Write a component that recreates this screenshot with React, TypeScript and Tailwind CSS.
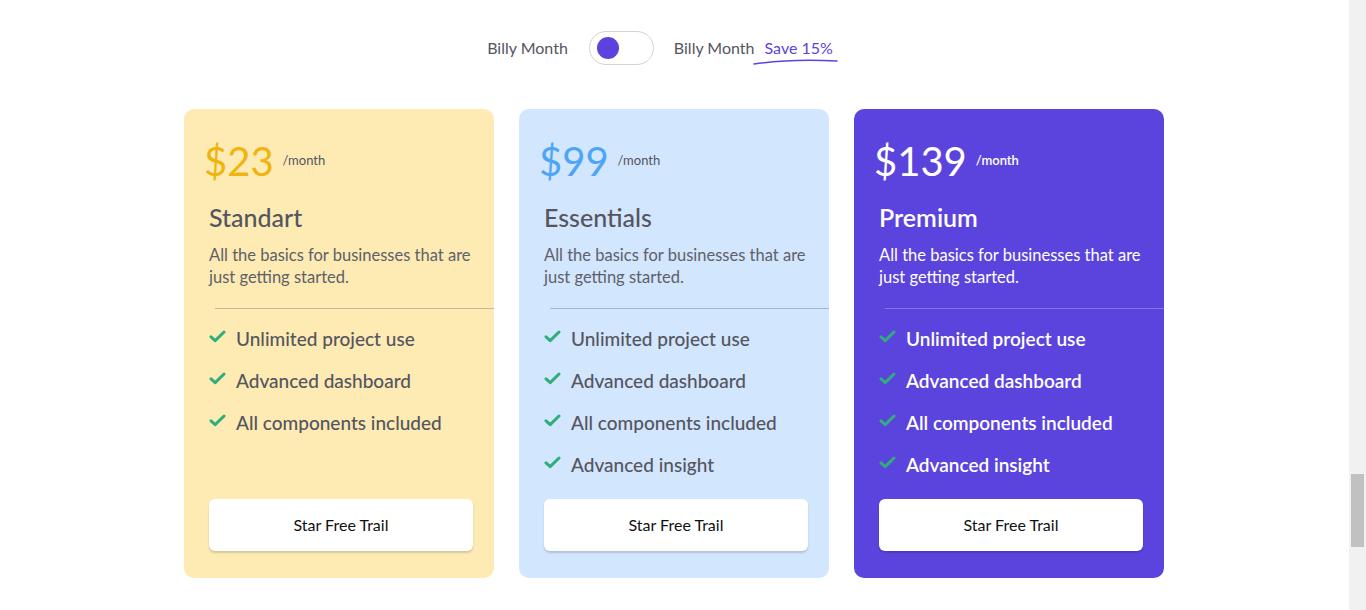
import React from "react";

type Plan = {
  price: string;
  name: string;
  bg: string;
  priceColor: string;
  monthColor: string;
  titleColor: string;
  descColor: string;
  divider: string;
  featColor: string;
  features: string[];
};

const plans: Plan[] = [
  {
    price: "$23",
    name: "Standart",
    bg: "bg-[#fdebb3]",
    priceColor: "text-[#f0b40f]",
    monthColor: "text-[#555560] font-normal",
    titleColor: "text-[#555560] font-medium",
    descColor: "text-[#60606a] font-normal",
    divider: "bg-[#c3b89c]",
    featColor: "text-[#55555f] font-medium",
    features: ["Unlimited project use", "Advanced dashboard", "All components included"],
  },
  {
    price: "$99",
    name: "Essentials",
    bg: "bg-[#d2e6fd]",
    priceColor: "text-[#4ea5f7]",
    monthColor: "text-[#555560] font-normal",
    titleColor: "text-[#555560] font-medium",
    descColor: "text-[#60606a] font-normal",
    divider: "bg-[#a7b6c6]",
    featColor: "text-[#55555f] font-medium",
    features: [
      "Unlimited project use",
      "Advanced dashboard",
      "All components included",
      "Advanced insight",
    ],
  },
  {
    price: "$139",
    name: "Premium",
    bg: "bg-[#5b44de]",
    priceColor: "text-white",
    monthColor: "text-white font-semibold",
    titleColor: "text-white font-semibold",
    descColor: "text-white font-normal",
    divider: "bg-[#8475ea]",
    featColor: "text-white font-semibold",
    features: [
      "Unlimited project use",
      "Advanced dashboard",
      "All components included",
      "Advanced insight",
    ],
  },
];

function CheckIcon() {
  return (
    <svg width="17" height="13" viewBox="0 0 17 13" className="shrink-0">
      <path
        d="M2 6.8 L6.2 10.6 L15 2"
        fill="none"
        stroke="#2fae7b"
        strokeWidth="3"
        strokeLinecap="round"
        strokeLinejoin="round"
      />
    </svg>
  );
}

function Card({ p }: { p: Plan }) {
  return (
    <div className={`w-[310px] rounded-[10px] ${p.bg} flex flex-col pb-[27px]`}>
      <div className="flex items-start pl-[20px] pt-[28px]">
        <span className={`text-[40px] leading-[48px] font-normal ${p.priceColor}`}>{p.price}</span>
        <span className={`ml-[9px] mt-[15px] text-[13px] leading-[16px] ${p.monthColor}`}>/month</span>
      </div>
      <div className={`pl-[25px] mt-[16px] text-[25px] leading-[32px] ${p.titleColor}`}>{p.name}</div>
      <div className={`pl-[25px] pr-[18px] mt-[11px] text-[16.5px] leading-[22px] ${p.descColor}`}>
        All the basics for businesses that are just getting started.
      </div>
      <div className={`ml-[31px] mt-[20px] h-px ${p.divider}`} />
      <ul className="mt-[9px] pl-[25px]">
        {p.features.map((f) => (
          <li key={f} className="flex items-center h-[42px]">
            <span className="-mt-[5px]">
              <CheckIcon />
            </span>
            <span className={`ml-[10px] text-[19px] leading-[24px] ${p.featColor}`}>{f}</span>
          </li>
        ))}
      </ul>
      <div className="mt-auto pt-[13px] pl-[25px] pr-[21px]">
        <button className="w-full h-[52px] rounded-[6px] bg-white text-[16px] text-[#111] shadow-[0_2px_2px_rgba(0,0,0,0.15)]">
          Star Free Trail
        </button>
      </div>
    </div>
  );
}

export default function App() {
  return (
    <div
      className="flex h-[610px] w-full overflow-hidden bg-white"
      style={{ fontFamily: "Lato, 'Open Sans', sans-serif" }}
    >
      <main className="flex-1 flex flex-col items-center pr-[1px]">
        <div className="mt-[31px] mr-[28px] flex items-center h-[34px]">
          <span className="text-[16px] text-[#55555f]">Billy Month</span>
          <div className="ml-[21px] w-[65px] h-[34px] rounded-full border border-[#d4d4d8] bg-white flex items-center pl-[7px]">
            <div className="w-[22px] h-[22px] rounded-full bg-[#5b44de]" />
          </div>
          <span className="ml-[20px] text-[16px] text-[#55555f]">Billy Month</span>
          <span className="relative ml-[10px] text-[16px] text-[#5b44de]">
            Save 15%
            <svg
              className="absolute left-[-12px] top-[22px]"
              width="86"
              height="8"
              viewBox="0 0 86 8"
            >
              <path
                d="M1 6 C 25 2.5, 55 1.5, 84 3"
                fill="none"
                stroke="#5b44de"
                strokeWidth="1.6"
                strokeLinecap="round"
              />
            </svg>
          </span>
        </div>
        <div className="mt-[44px] flex gap-[25px] items-stretch">
          {plans.map((p) => (
            <Card key={p.name} p={p} />
          ))}
        </div>
      </main>
      <aside className="w-[17px] h-full bg-[#f1f1f1] shrink-0">
        <div className="mt-[474px] mx-[2px] h-[73px] bg-[#c1c1c1]" />
      </aside>
    </div>
  );
}
